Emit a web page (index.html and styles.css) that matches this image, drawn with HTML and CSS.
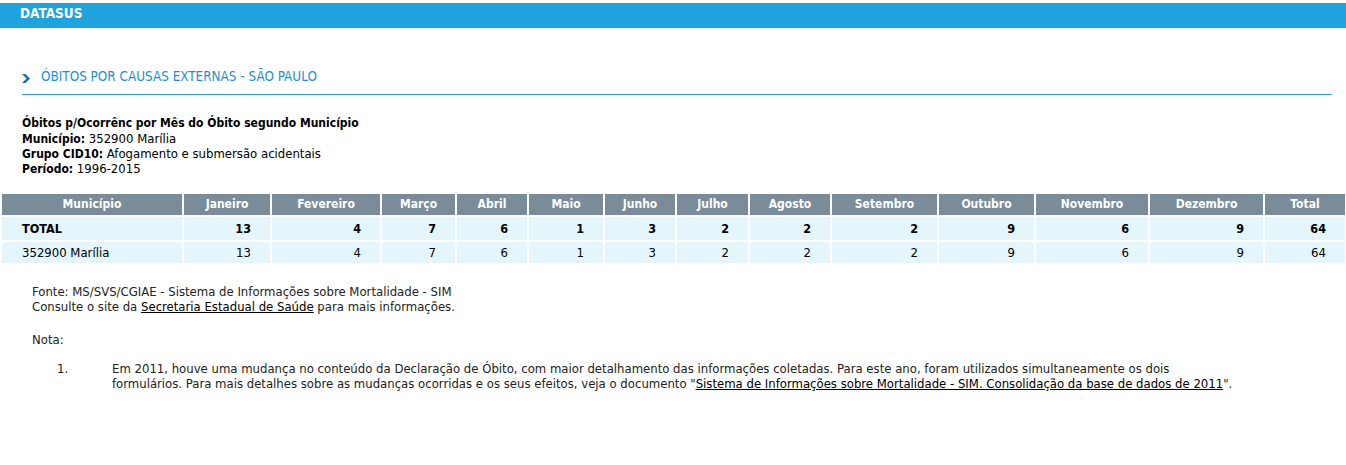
FILE: index.html
```html
<!DOCTYPE html>
<html lang="pt-BR">
<head>
<meta charset="utf-8">
<title>DATASUS</title>
<link rel="stylesheet" href="styles.css">
</head>
<body>
<header class="topbar"><span class="brand">DATASUS</span></header>

<section class="heading">
  <h1 class="section-title">
    <svg class="chevron" width="8" height="9" viewBox="0 0 8 9"><path d="M0 0 L3.5 0 L8 4.5 L3.5 9 L0 9 L4.5 4.5 Z" fill="#1b6fb5"/></svg>
    <span>ÓBITOS POR CAUSAS EXTERNAS - SÃO PAULO</span>
  </h1>
</section>

<section class="info">
  <div class="info-title">Óbitos p/Ocorrênc por Mês do Óbito segundo Município</div>
  <div><b>Município:</b> 352900 Marília</div>
  <div><b>Grupo CID10:</b> Afogamento e submersão acidentais</div>
  <div><b>Período:</b> 1996-2015</div>
</section>

<table class="data">
  <colgroup>
    <col class="c-mun"><col class="c-jan"><col class="c-fev"><col class="c-mar"><col class="c-abr"><col class="c-mai"><col class="c-jun"><col class="c-jul"><col class="c-ago"><col class="c-set"><col class="c-out"><col class="c-nov"><col class="c-dez"><col class="c-tot">
  </colgroup>
  <thead>
    <tr><th>Município</th><th>Janeiro</th><th>Fevereiro</th><th>Março</th><th>Abril</th><th>Maio</th><th>Junho</th><th>Julho</th><th>Agosto</th><th>Setembro</th><th>Outubro</th><th>Novembro</th><th>Dezembro</th><th>Total</th></tr>
  </thead>
  <tbody>
    <tr class="total"><td class="name">TOTAL</td><td>13</td><td>4</td><td>7</td><td>6</td><td>1</td><td>3</td><td>2</td><td>2</td><td>2</td><td>9</td><td>6</td><td>9</td><td>64</td></tr>
    <tr><td class="name">352900 Marília</td><td>13</td><td>4</td><td>7</td><td>6</td><td>1</td><td>3</td><td>2</td><td>2</td><td>2</td><td>9</td><td>6</td><td>9</td><td>64</td></tr>
  </tbody>
</table>

<section class="notes">
  <div>Fonte: MS/SVS/CGIAE - Sistema de Informações sobre Mortalidade - SIM</div>
  <div>Consulte o site da <a href="#">Secretaria Estadual de Saúde</a> para mais informações.</div>
  <div class="nota">Nota:</div>
  <ol class="nota-list">
    <li><span class="num">1.</span><span class="txt">Em 2011, houve uma mudança no conteúdo da Declaração de Óbito, com maior detalhamento das informações coletadas. Para este ano, foram utilizados simultaneamente os dois formulários. Para mais detalhes sobre as mudanças ocorridas e os seus efeitos, veja o documento "<a href="#">Sistema de Informações sobre Mortalidade - SIM. Consolidação da base de dados de 2011</a>".</span></li>
  </ol>
</section>
</body>
</html>
```

FILE: styles.css
```css
html, body {
  margin: 0;
  padding: 0;
  background: #ffffff;
}
body {
  padding-top: 3px;
  font-family: "DejaVu Sans Condensed", "DejaVu Sans", sans-serif;
  font-size: 13px;
  color: #000;
}
.topbar {
  height: 25px;
  background: #1fa3dd;
  display: flex;
  align-items: flex-start;
}
.brand {
  padding-left: 20px;
  color: #fff;
  font-weight: bold;
  font-size: 13.5px;
  line-height: 20px;
}
.heading {
  padding: 0 14px 0 22px;
}
.section-title {
  margin: 40px 0 0 0;
  padding-bottom: 8px;
  border-bottom: 1px solid #2a9fd6;
  display: flex;
  align-items: center;
  gap: 11px;
  font-size: 13.4px;
  font-weight: normal;
  color: #1e8fcf;
  line-height: 18px;
}
.chevron { flex: none; margin-top: 2px; }
.info {
  padding: 21px 0 0 22px;
  line-height: 15px;
}
.info > div {
  height: 15px;
  overflow: visible;
}
.info b, .info-title {
  font-weight: bold;
  font-size: 12px;
}
.data {
  margin-top: 16px;
  width: 1347px;
  border-collapse: separate;
  border-spacing: 2px;
  table-layout: fixed;
}
.c-mun { width: 180px; }
.c-jan { width: 86px; }
.c-fev { width: 108px; }
.c-mar { width: 73px; }
.c-abr { width: 70px; }
.c-mai { width: 74px; }
.c-jun { width: 70px; }
.c-jul { width: 71px; }
.c-ago { width: 80px; }
.c-set { width: 105px; }
.c-out { width: 95px; }
.c-nov { width: 112px; }
.c-dez { width: 113px; }
.c-tot { width: 80px; }
.data th {
  background: #7a8b9a;
  color: #fff;
  font-weight: bold;
  font-size: 12px;
  line-height: 15px;
  height: 21px;
  padding: 0;
  text-align: center;
}
.data td {
  background: #e4f5fc;
  text-align: right;
  padding: 0 19px 0 0;
  line-height: 15px;
  height: 21px;
}
.data td.name {
  text-align: left;
  padding-left: 20px;
}
.data tr.total td {
  font-weight: bold;
  font-size: 12.5px;
  height: 23px;
}
.notes {
  padding: 19px 0 0 32px;
  line-height: 15px;
  color: #222;
}
.notes a { color: #000; text-decoration: underline; }
.nota { margin-top: 18px; }
.nota-list {
  list-style: none;
  margin: 14px 0 0 0;
  padding: 0;
}
.nota-list li {
  display: flex;
}
.nota-list .num {
  flex: none;
  width: 80px;
  padding-left: 25px;
  box-sizing: border-box;
}
.nota-list .txt {
  width: 1125px;
}
```
